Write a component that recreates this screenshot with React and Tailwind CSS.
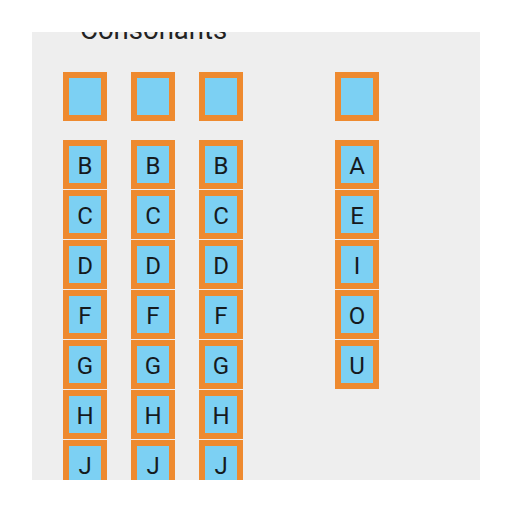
import React from 'react';

const columns = [
  ['B', 'C', 'D', 'F', 'G', 'H', 'J'],
  ['B', 'C', 'D', 'F', 'G', 'H', 'J'],
  ['B', 'C', 'D', 'F', 'G', 'H', 'J'],
  null,
  ['A', 'E', 'I', 'O', 'U'],
];

const Tile = ({ letter }) => (
  <div className="w-[44px] h-[49px] shrink-0 border-[6px] border-[#ee8a2f] bg-[#7cd0f3] flex items-center justify-center pt-[3px] text-[24px] text-[#151a1e] leading-none">
    {letter}
  </div>
);

const App = () => {
  return (
    <div className="w-[512px] h-[512px] bg-white p-8 font-['Roboto',sans-serif]">
      <div className="h-full bg-[#eeeeee] overflow-hidden">
        <div className="-mt-[18px] pl-[48px] text-[27.5px] leading-[32px] text-[#222222]">Consonants</div>

        <div className="mt-[26px] pl-[31px] grid grid-cols-[repeat(5,44px)] gap-x-[24px]">
          {columns.map((col, i) =>
            col ? (
              <div key={i} className="flex flex-col">
                <Tile letter="" />
                <div className="mt-[19px] flex flex-col gap-px">
                  {col.map((l, j) => (
                    <Tile key={j} letter={l} />
                  ))}
                </div>
              </div>
            ) : (
              <div key={i} />
            )
          )}
        </div>
      </div>
    </div>
  );
};

export default App;
